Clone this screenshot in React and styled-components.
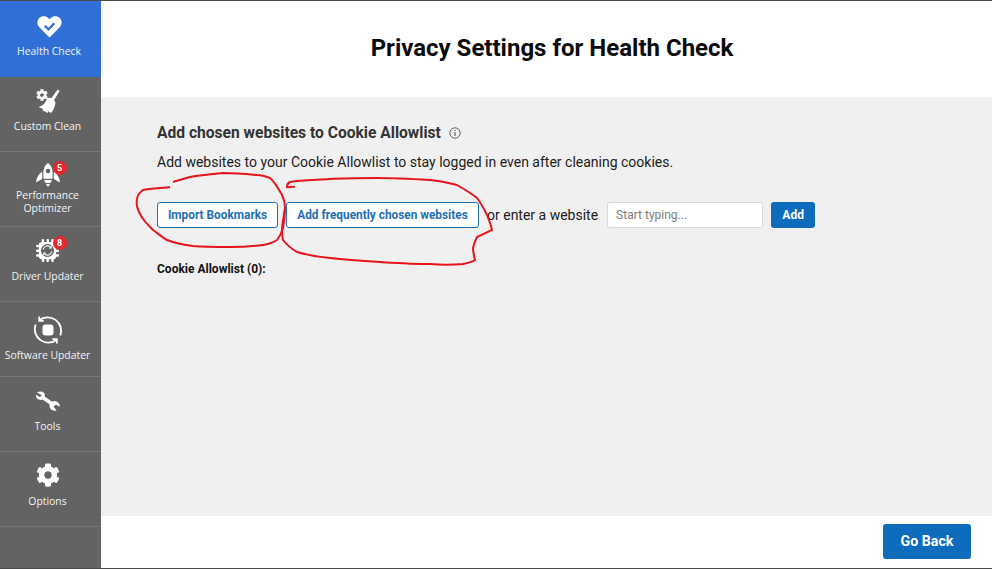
import React from 'react';
import styled, { createGlobalStyle } from 'styled-components';
import { FaCog } from 'react-icons/fa';

const GlobalStyle = createGlobalStyle`
  html, body {
    margin: 0;
    padding: 0;
    background: #fff;
    overflow: hidden;
  }
  * {
    box-sizing: border-box;
  }
`;

const Page = styled.div`
  position: relative;
  display: flex;
  width: 992px;
  height: 569px;
  background: #fff;
  border-top: 1px solid #4a4a4a;
  border-bottom: 1px solid #4a4a4a;
  font-family: Roboto, "Liberation Sans", sans-serif;
`;

const Sidebar = styled.nav`
  display: flex;
  flex-direction: column;
  width: 101px;
  flex: none;
  background: #636363;
`;

const NavItem = styled.div`
  display: flex;
  flex-direction: column;
  align-items: center;
  height: ${p => p.$height || 75}px;
  padding: ${p => p.$top || 12}px ${p => (p.$active ? 3 : 6)}px 0 0;
  background: ${p => (p.$active ? '#2f6fd6' : 'transparent')};
  border-bottom: ${p => (p.$active ? 'none' : '1px solid #757575')};
`;

const IconWrap = styled.div`
  position: relative;
  display: flex;
  align-items: center;
  justify-content: center;
  width: 40px;
  height: ${p => p.$height || 30}px;
  color: #fff;
  flex: none;
`;

const Badge = styled.span`
  position: absolute;
  top: ${p => p.$top}px;
  right: 1px;
  width: 14px;
  height: 14px;
  border-radius: 50%;
  background: #e8262d;
  color: #fff;
  font-size: 9px;
  font-weight: 700;
  line-height: 14px;
  text-align: center;
`;

const NavLabel = styled.div`
  margin-top: ${p => p.$gap}px;
  color: #f4f4f4;
  font-family: "Open Sans", sans-serif;
  font-size: 10.4px;
  line-height: 13px;
  text-align: center;
  white-space: nowrap;
`;

const Main = styled.main`
  display: flex;
  flex-direction: column;
  flex: 1;
  min-width: 0;
`;

const Header = styled.header`
  display: flex;
  align-items: center;
  justify-content: center;
  height: 96px;
  flex: none;
  padding: 0 0 3px 11px;
`;

const Title = styled.h1`
  margin: 0;
  color: #0a0a0a;
  font-size: 24px;
  font-weight: 700;
  line-height: 28px;
`;

const Content = styled.section`
  flex: 1;
  padding: 27px 56px 0;
  background: #f0f0f0;
`;

const HeadingRow = styled.div`
  display: flex;
  align-items: center;
  gap: 8px;
  height: 18px;
`;

const Heading = styled.h2`
  margin: 0;
  color: #333;
  font-size: 15.6px;
  font-weight: 700;
  line-height: 18px;
`;

const Intro = styled.p`
  margin: 11px 0 0;
  color: #1c1c1c;
  font-size: 14px;
  line-height: 18px;
`;

const ActionRow = styled.div`
  display: flex;
  align-items: center;
  margin-top: 31px;
  height: 26px;
`;

const OutlineButton = styled.button`
  width: ${p => p.$width}px;
  height: 26px;
  margin-right: ${p => p.$gap}px;
  padding: 0;
  border: 1px solid #1f6fb5;
  border-radius: 3px;
  background: #fff;
  color: #1f6fb5;
  font-family: Roboto, sans-serif;
  font-size: 11.85px;
  font-weight: 700;
  white-space: nowrap;
`;

const OrText = styled.span`
  color: #1c1c1c;
  font-size: 14px;
  margin-right: 9px;
  white-space: nowrap;
`;

const TextInput = styled.input`
  width: 156px;
  height: 26px;
  margin-right: 8px;
  padding: 0 8px;
  border: 1px solid #d6d8dc;
  border-radius: 3px;
  background: #fff;
  font-family: Roboto, sans-serif;
  font-size: 12px;
  &::placeholder {
    color: #7c7c7c;
    opacity: 1;
  }
`;

const SolidButton = styled.button`
  width: ${p => p.$width}px;
  height: ${p => p.$height}px;
  padding: 0;
  border: none;
  border-radius: ${p => p.$radius}px;
  background: #0f6cbd;
  color: #fff;
  font-family: Roboto, sans-serif;
  font-size: ${p => p.$size}px;
  font-weight: 700;
`;

const ListLabel = styled.div`
  margin-top: 34px;
  color: #111;
  font-size: 12px;
  font-weight: 700;
  line-height: 14px;
`;

const Footer = styled.footer`
  display: flex;
  align-items: center;
  justify-content: flex-end;
  height: 52px;
  flex: none;
  padding: 0 21px 2px 0;
`;

const Scribble = styled.svg`
  position: absolute;
  left: 0;
  top: -1px;
  width: 992px;
  height: 569px;
  pointer-events: none;
`;

const HeartIcon = () => (
  <svg width="25" height="22" viewBox="0 0 27 24">
    <path
      fill="#fff"
      d="M13.5 23.5 2.6 12.6C-.4 9.6-.4 5 2.3 2.3 5-.3 9.6-.3 12.2 2.3l1.3 1.3 1.3-1.3c2.6-2.6 7.2-2.6 9.9 0 2.7 2.7 2.7 7.3-.3 10.3z"
    />
    <path fill="none" stroke="#2f6fd6" strokeWidth="2.4" d="M8.4 10.6l4 4 6.4-6.6" />
  </svg>
);

const BroomIcon = () => (
  <svg width="24" height="26" viewBox="0 0 24 26">
    <FaCog x="0" y="2" size={12} color="#fff" />
    <path fill="#fff" d="M21.6 2.500 23.600 4 17.800 13.600 15 11.800z" />
    <path
      fill="#fff"
      d="M11 11C14 10 18 12 19.500 15.500 19 20 17 24 15 26L12 24.300 12 26 6.500 23.400 7 22 2.500 20C7 19 10 15.500 11 11z"
    />
  </svg>
);

const RocketIcon = () => (
  <svg width="24" height="24" viewBox="0 0 24 24">
    <path
      fill="#fff"
      fillRule="evenodd"
      d="M12 0c3 2.200 4.600 5.600 4.600 9.400v6.400H7.400V9.400C7.400 5.600 9 2.200 12 0zm0 5.700a2.300 2.300 0 1 0 0 4.600 2.300 2.300 0 0 0 0-4.600z"
    />
    <path fill="#fff" d="M6.200 8.500V16L0 19.500C.4 15 2.500 11 6.200 8.500zM17.800 8.500V16l6.200 3.500C23.600 15 21.500 11 17.800 8.500zM8 17h8l-1.500 3h-5zM10 21h4l-2 3z" />
  </svg>
);

const pinOffsets = [6, 11, 16];

const ChipIcon = () => (
  <svg width="23" height="23" viewBox="0 0 24 24">
    {pinOffsets.map(o => (
      <g key={o} fill="#fff">
        <rect x={o} y="0" width="2.500" height="24" rx="1" />
        <rect x="0" y={o} width="24" height="2.500" rx="1" />
      </g>
    ))}
    <rect x="3" y="3" width="18" height="18" rx="3" fill="#fff" />
    <circle cx="12" cy="12" r="6.800" fill="#636363" />
    <path fill="none" stroke="#fff" strokeWidth="1.100" d="M7.500 11a4.600 4.600 0 0 1 8-2.200M16.500 13a4.600 4.600 0 0 1-8 2.200" />
    <path fill="#fff" d="M16.400 6.800V10h-3.200zM7.600 17.200V14h3.200z" />
  </svg>
);

const SyncStopIcon = () => (
  <svg width="30" height="30" viewBox="0 0 30 30">
    <path fill="none" stroke="#fff" strokeWidth="1.800" d="M6.200 5.200A13.600 13.600 0 0 1 27.400 20.500M23.800 24.800A13.600 13.600 0 0 1 2.600 9.500" />
    <path fill="none" stroke="#fff" strokeWidth="1.800" d="M6.200 1.500v4.300h4.500M23.800 28.500v-4.300h-4.500" />
    <rect x="9.500" y="9.500" width="11" height="11" rx="3" fill="#fff" />
  </svg>
);

const WrenchIcon = () => (
  <svg width="24" height="20" viewBox="0 0 24 20">
    <path
      fill="#fff"
      d="M1 1.500C3 .2 6 .2 7.600 1.600 8.800 2.800 9 4.400 8.700 5.600L15.800 10.600C17.200 9.800 19.600 9.800 21.200 10.800 23 12 24 14.200 23.800 15.800L19.800 13.800 17.600 15.600 20.600 19.500C18.600 20 16 19.600 14.600 18 13.400 16.600 13.300 14.800 13.700 13.500L6.600 8.600C5 9.200 2.800 9 1.400 7.800.3 6.800 0 5.200 0 3.800L3.600 6 6 4.200z"
    />
  </svg>
);

const InfoIcon = () => (
  <svg width="12" height="12" viewBox="0 0 12 12">
    <circle cx="6" cy="6" r="5.200" fill="none" stroke="#555" strokeWidth="0.900" />
    <path fill="none" stroke="#555" strokeWidth="1.100" d="M6 5v4M6 3v1.100" />
  </svg>
);

const navItems = [
  { label: ['Health Check'], icon: <HeartIcon />, active: true, height: 76, top: 13, iconHeight: 26, gap: 5 },
  { label: ['Custom Clean'], icon: <BroomIcon />, top: 8, gap: 5 },
  { label: ['Performance', 'Optimizer'], icon: <RocketIcon />, badge: 5, badgeTop: -1, top: 10, iconHeight: 26, gap: 1 },
  { label: ['Driver Updater'], icon: <ChipIcon />, badge: 8, badgeTop: 1, top: 8, gap: 5 },
  { label: ['Software Updater'], icon: <SyncStopIcon />, top: 13, gap: 4 },
  { label: ['Tools'], icon: <WrenchIcon />, top: 9, gap: 4 },
  { label: ['Options'], icon: <FaCog size={24} />, top: 8, gap: 5 },
];

const App = () => (
  <Page>
    <GlobalStyle />
    <Sidebar>
      {navItems.map(item => (
        <NavItem key={item.label[0]} $active={item.active} $height={item.height} $top={item.top}>
          <IconWrap $height={item.iconHeight}>
            {item.icon}
            {item.badge && <Badge $top={item.badgeTop}>{item.badge}</Badge>}
          </IconWrap>
          <NavLabel $gap={item.gap}>
            {item.label.map(line => (
              <div key={line}>{line}</div>
            ))}
          </NavLabel>
        </NavItem>
      ))}
    </Sidebar>
    <Main>
      <Header>
        <Title>Privacy Settings for Health Check</Title>
      </Header>
      <Content>
        <HeadingRow>
          <Heading>Add chosen websites to Cookie Allowlist</Heading>
          <InfoIcon />
        </HeadingRow>
        <Intro>Add websites to your Cookie Allowlist to stay logged in even after cleaning cookies.</Intro>
        <ActionRow>
          <OutlineButton $width={121} $gap={8}>Import Bookmarks</OutlineButton>
          <OutlineButton $width={193} $gap={8}>Add frequently chosen websites</OutlineButton>
          <OrText>or enter a website</OrText>
          <TextInput placeholder="Start typing..." />
          <SolidButton $width={44} $height={26} $radius={3} $size={12}>Add</SolidButton>
        </ActionRow>
        <ListLabel>Cookie Allowlist (0):</ListLabel>
      </Content>
      <Footer>
        <SolidButton $width={88} $height={35} $radius={3} $size={14.2}>Go Back</SolidButton>
      </Footer>
    </Main>
    <Scribble viewBox="0 0 992 569">
      <path
        fill="none"
        stroke="#e8141c"
        strokeWidth="2"
        d="M170 187C165 188 150 188 143 190C137 194 136 200 137 206C139 216 147 224 153 230C160 235 163 238 167 240C175 243 184 245 193 246C205 247 218 247 230 247C243 247 255 246 263 245C270 244 274 242 277 240C280 236 282 232 283 228C284 222 285 214 285 208C285 203 284 199 282 195C279 190 275 182 270 178C265 176 261 175 257 175C246 174 234 173 223 173C212 174 200 175 190 177C183 179 177 181 173 182"
      />
      <path
        fill="none"
        stroke="#e8141c"
        strokeWidth="2"
        d="M295 187C292 186 289 188 287 187C287 185 288 183 290 182C302 180 316 180 330 179C345 178 361 178 377 178C395 178 413 179 430 180C440 181 449 183 457 185C464 189 471 193 477 198C481 203 484 209 487 215C489 220 491 225 492 230L477 237C475 241 474 244 473 248C473 252 474 256 475 260C472 262 468 263 463 264C452 265 441 265 430 264C413 264 397 263 380 262C363 261 347 260 330 258C318 257 307 255 297 252C292 249 287 245 283 240C282 236 282 232 282 228C283 221 284 214 285 208"
      />
    </Scribble>
  </Page>
);

export default App;
